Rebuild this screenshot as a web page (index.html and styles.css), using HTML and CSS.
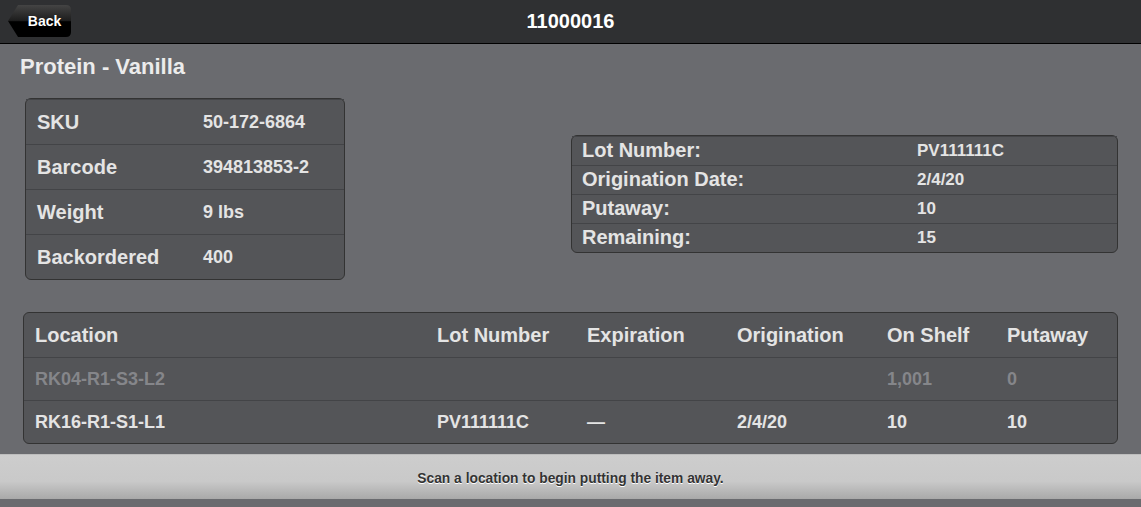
FILE: index.html
```html
<!DOCTYPE html>
<html lang="en">
<head>
    <meta charset="UTF-8">
    <meta name="viewport" content="width=device-width, initial-scale=1.0">
    <title>11000016</title>
    <link rel="stylesheet" href="styles.css">
</head>
<body>
    <div class="header">
        <a href="#" class="back-btn">Back</a>
        <h1 class="page-title">11000016</h1>
    </div>

    <div class="content">
        <h2 class="item-name">Protein - Vanilla</h2>

        <div class="summary">
            <table class="card item-card">
                <tr><td class="label">SKU</td><td class="value">50-172-6864</td></tr>
                <tr><td class="label">Barcode</td><td class="value">394813853-2</td></tr>
                <tr><td class="label">Weight</td><td class="value">9 lbs</td></tr>
                <tr><td class="label">Backordered</td><td class="value">400</td></tr>
            </table>

            <table class="card lot-card">
                <tr><td class="label">Lot Number:</td><td class="value">PV111111C</td></tr>
                <tr><td class="label">Origination Date:</td><td class="value">2/4/20</td></tr>
                <tr><td class="label">Putaway:</td><td class="value">10</td></tr>
                <tr><td class="label">Remaining:</td><td class="value">15</td></tr>
            </table>
        </div>

        <table class="card locations">
            <thead>
                <tr>
                    <th class="col-loc">Location</th>
                    <th class="col-lot">Lot Number</th>
                    <th class="col-exp">Expiration</th>
                    <th class="col-orig">Origination</th>
                    <th class="col-shelf">On Shelf</th>
                    <th>Putaway</th>
                </tr>
            </thead>
            <tbody>
                <tr class="inactive">
                    <td>RK04-R1-S3-L2</td>
                    <td></td>
                    <td></td>
                    <td></td>
                    <td>1,001</td>
                    <td>0</td>
                </tr>
                <tr>
                    <td>RK16-R1-S1-L1</td>
                    <td>PV111111C</td>
                    <td>&mdash;</td>
                    <td>2/4/20</td>
                    <td>10</td>
                    <td>10</td>
                </tr>
            </tbody>
        </table>
    </div>

    <div class="footer">Scan a location to begin putting the item away.</div>
</body>
</html>
```

FILE: styles.css
```css
/* General styles */
* {
    margin: 0;
    padding: 0;
    box-sizing: border-box;
}

body {
    font-family: "Liberation Sans", Arial, sans-serif;
    font-weight: bold;
    background: #6a6b6f;
    color: #e4e4e4;
    height: 507px;
    overflow: hidden;
}

/* Header bar */
.header {
    position: relative;
    height: 44px;
    background: #2f3032;
    border-bottom: 1px solid #000;
    display: flex;
    align-items: center;
    justify-content: center;
}

.page-title {
    font-size: 20px;
    color: #fff;
}

.back-btn {
    position: absolute;
    left: 8px;
    top: 5px;
    width: 63px;
    height: 32px;
    padding-left: 10px;
    display: flex;
    align-items: center;
    justify-content: center;
    text-decoration: none;
    color: #fff;
    font-size: 14px;
    text-shadow: 0 1px 1px #000;
    background: linear-gradient(#444, #1c1c1c 50%, #000 52%, #000);
    clip-path: path('M10 0 H58 Q63 0 63 5 V27 Q63 32 58 32 H10 L0 16 Z');
}

/* Content */
.content {
    padding-top: 10px;
}

.item-name {
    font-size: 22px;
    line-height: 26px;
    margin-left: 20px;
    color: #ececec;
}

.summary {
    display: flex;
    align-items: center;
    justify-content: space-between;
    margin: 18px 23px 0 25px;
}

.card {
    border-collapse: separate;
    border-spacing: 0;
    background: #545558;
    border: 1px solid #333;
    border-radius: 6px;
}

.card td,
.card th {
    text-align: left;
    white-space: nowrap;
}

.card tr + tr td,
.card tbody tr td {
    border-top: 1px solid #434447;
}

.item-card {
    width: 320px;
}

.item-card td {
    height: 45px;
}

.item-card .label {
    width: 177px;
    padding-left: 11px;
    font-size: 20px;
}

.item-card .value {
    font-size: 18px;
}

.lot-card {
    width: 547px;
    margin-top: 9px;
}

.lot-card td {
    height: 29px;
}

.lot-card .label {
    width: 345px;
    padding-left: 10px;
    font-size: 20px;
}

.lot-card .value {
    font-size: 17px;
}

/* Locations table */
.locations {
    width: 1095px;
    margin: 32px 0 0 23px;
}

.locations th {
    height: 44px;
    font-size: 20px;
    padding-left: 11px;
}

.locations td {
    height: 43px;
    font-size: 18px;
    padding-left: 11px;
}

.col-loc { width: 402px; }
.col-lot { width: 150px; }
.col-exp { width: 150px; }
.col-orig { width: 150px; }
.col-shelf { width: 120px; }

.inactive td {
    color: #85868a;
}

/* Footer */
.footer {
    margin-top: 10px;
    height: 45px;
    padding-top: 3px;
    display: flex;
    align-items: center;
    justify-content: center;
    background: linear-gradient(#cdcdcd, #c9c9c9 60%, #a9a9a9);
    border-top: 1px solid #bdbdbd;
    color: #333;
    font-size: 13.8px;
    text-shadow: 0 1px 0 #fff;
}
```
